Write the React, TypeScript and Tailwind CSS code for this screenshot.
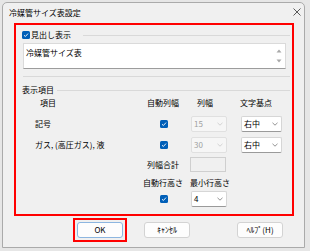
import React from 'react';

const font = "font-['Noto_Sans_CJK_JP','Liberation_Sans',sans-serif]";

const Check = () => (
  <span className="flex h-[8px] w-[8px] items-center justify-center rounded-[1.5px] bg-[#005fb8]">
    <svg width="6" height="6" viewBox="0 0 6 6">
      <path d="M1 3.2 L2.4 4.5 L5 1.6" fill="none" stroke="#fff" strokeWidth="0.9" />
    </svg>
  </span>
);

const Chevron = ({ light }: { light?: boolean }) => (
  <svg width="6" height="4" viewBox="0 0 6 4" className="mr-[3px] shrink-0">
    <path d="M0.5 0.8 L3 3.2 L5.5 0.8" fill="none" stroke={light ? '#c4c4c4' : '#666'} strokeWidth="0.7" />
  </svg>
);

type SelectProps = { value: string; width: string; disabled?: boolean };

const Select = ({ value, width, disabled }: SelectProps) => (
  <div
    className={
      disabled
        ? `flex h-[16px] ${width} items-center justify-between rounded-[2px] border border-[#e0e0e0] bg-[#f6f6f6] pl-[2px] text-[#a0a0a0]`
        : `flex h-[16px] ${width} items-center justify-between rounded-[2px] border border-[#d6d6d6] border-b-[#9a9a9a] bg-white pl-[2px] text-black`
    }
  >
    <span className="leading-none">{value}</span>
    <Chevron light={disabled} />
  </div>
);

const cols = 'grid grid-cols-[120px_42px_52px_56px] items-center';

const Button = ({ label, primary }: { label: string; primary?: boolean }) => (
  <div
    className={
      primary
        ? 'flex h-[16px] w-[46px] items-center justify-center rounded-[3px] border border-[#8db6e0] bg-[#fdfdfd] text-black'
        : 'flex h-[16px] w-[46px] items-center justify-center rounded-[3px] border border-[#d3d3d3] bg-[#fdfdfd] text-black'
    }
  >
    <span className="leading-none">{label}</span>
  </div>
);

export default function App() {
  return (
    <div className={`h-[251px] w-[310px] overflow-hidden bg-[#e6e6e6] pl-[2px] pt-[2px] text-[8px] ${font}`}>
      <div className="flex h-[246px] w-[303px] flex-col rounded-t-[5px] border border-[#aaaaaa] bg-[#f0f0f0]">
        {/* Title bar */}
        <div className="flex h-[20px] items-center justify-between pl-[6px] pr-[3px]">
          <span className="leading-none text-black">冷媒管サイズ表設定</span>
          <svg width="8" height="8" viewBox="0 0 8 8" className="mb-[2px]">
            <path d="M0.5 0.5 L7.5 7.5 M7.5 0.5 L0.5 7.5" stroke="#333" strokeWidth="0.8" />
          </svg>
        </div>

        {/* Highlighted content */}
        <div className="ml-[11px] flex h-[193px] w-[280px] flex-col border-2 border-[#ff0000] pl-[6px] pr-[2px]">
          {/* Heading group */}
          <div className="mt-[5px] flex h-[10px] items-center">
            <Check />
            <span className="ml-[1px] leading-none text-black">見出し表示</span>
            <div className="ml-[12px] h-px flex-1 bg-[#d9d9d9]" />
          </div>
          <div className="ml-[1px] mt-[3px] flex h-[26px] w-[263px] justify-between border border-[#dadada] border-b-[#9c9c9c] bg-white">
            <span className="pl-[2px] pt-[4px] leading-[10px] text-black">冷媒管サイズ表</span>
            <div className="mr-[3px] flex flex-col items-center pt-[5px]">
              <svg width="6" height="4" viewBox="0 0 6 4">
                <path d="M0.5 3.5 L3 0.5 L5.5 3.5 Z" fill="#a8a8a8" />
              </svg>
              <svg width="6" height="4" viewBox="0 0 6 4" className="mt-[6px]">
                <path d="M0.5 0.5 L3 3.5 L5.5 0.5 Z" fill="#a8a8a8" />
              </svg>
            </div>
          </div>
          <div className="ml-[1px] mt-[7px] h-px bg-[#d9d9d9]" />

          {/* Display items group */}
          <div className="mt-[8px] flex h-[10px] items-center">
            <span className="leading-none text-black">表示項目</span>
            <div className="ml-[3px] h-px flex-1 bg-[#d9d9d9]" />
          </div>

          <div className={`${cols} mt-[2px] h-[12px] leading-none text-black`}>
            <span className="pl-[18px]">項目</span>
            <span className="text-center">自動列幅</span>
            <span className="pl-[13px]">列幅</span>
            <span className="pl-[4px]">文字基点</span>
          </div>

          <div className={`${cols} mt-[7px] h-[16px] text-black`}>
            <span className="pl-[13px] leading-none">記号</span>
            <div className="flex justify-center pl-[1px]">
              <Check />
            </div>
            <div className="pl-[7px]">
              <Select value="15" width="w-[36px]" disabled />
            </div>
            <div className="pl-[5px]">
              <Select value="右中" width="w-[41px]" />
            </div>
          </div>

          <div className={`${cols} mt-[5px] h-[16px] text-black`}>
            <span className="pl-[13px] leading-none">ガス, (高圧ガス), 液</span>
            <div className="flex justify-center pl-[1px]">
              <Check />
            </div>
            <div className="pl-[7px]">
              <Select value="30" width="w-[36px]" disabled />
            </div>
            <div className="pl-[5px]">
              <Select value="右中" width="w-[41px]" />
            </div>
          </div>

          <div className={`${cols} mt-[4px] h-[15px] text-black`}>
            <span />
            <span className="text-center leading-none">列幅合計</span>
            <div className="pl-[6px]">
              <div className="h-[15px] w-[36px] border border-[#cfcfcf] bg-[#f0f0f0]" />
            </div>
            <span />
          </div>

          <div className={`${cols} mt-[5px] h-[12px] leading-none text-black`}>
            <span />
            <span className="text-center">自動行高さ</span>
            <span className="pl-[6px]">最小行高さ</span>
            <span />
          </div>

          <div className={`${cols} mt-[2px] h-[16px] text-black`}>
            <span />
            <div className="flex justify-center pl-[1px]">
              <Check />
            </div>
            <div className="pl-[7px]">
              <Select value="4" width="w-[36px]" />
            </div>
            <span />
          </div>
        </div>

        {/* Buttons */}
        <div className="mt-[2px] flex items-center">
          <div className="ml-[70px] flex h-[24px] w-[54px] items-center justify-center border-2 border-[#ff0000]">
            <Button label="OK" primary />
          </div>
          <div className="ml-[17px]">
            <Button label="ｷｬﾝｾﾙ" />
          </div>
          <div className="ml-[47px]">
            <Button label="ﾍﾙﾌﾟ(H)" />
          </div>
        </div>
      </div>
    </div>
  );
}
